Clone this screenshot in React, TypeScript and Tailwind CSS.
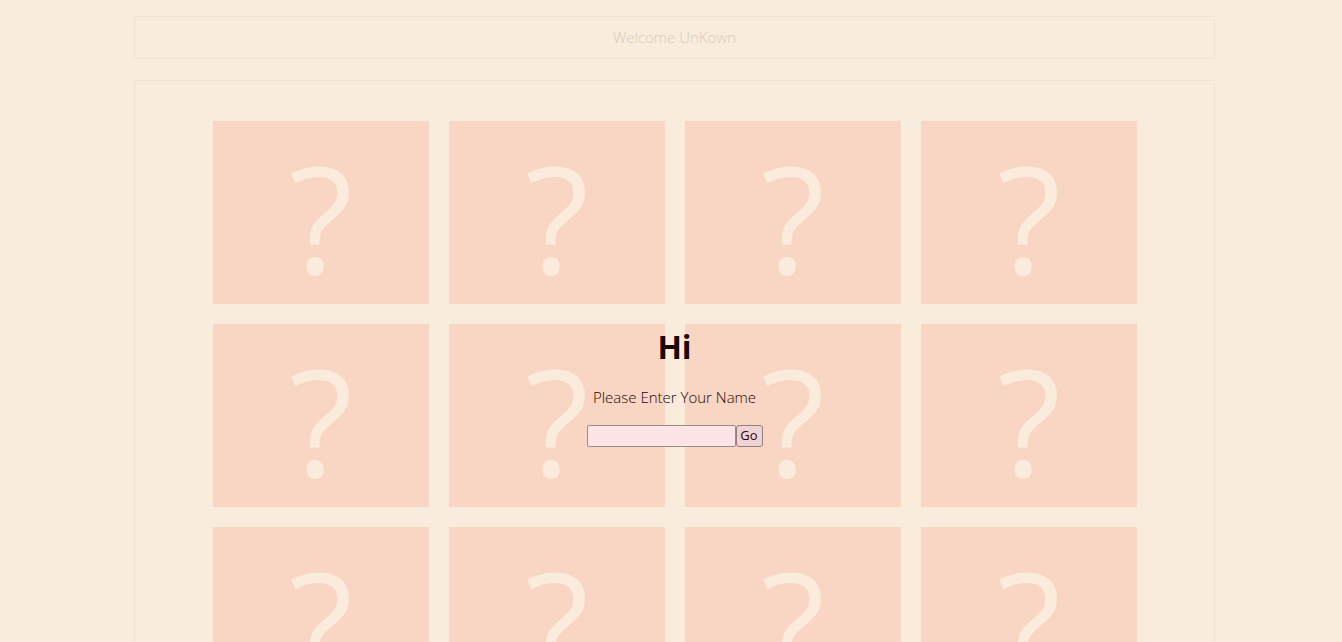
import React, { useState } from 'react';

const cards = Array.from({ length: 16 }, (_, i) => i);

function App() {
  const [name, setName] = useState('');

  return (
    <div className="min-h-screen bg-[#faecdc] pt-4 font-['Open_Sans',sans-serif]">
      <div className="ml-[134px] mr-[127px] flex h-[43px] items-center justify-center border border-[#f3e2d2] text-[15px] font-light text-[#d6cbc0]">
        Welcome UnKown
      </div>
      <div className="relative ml-[134px] mr-[127px] mt-[21px] border border-[#f3e2d2] pt-10 pb-10">
        <div className="grid grid-cols-[repeat(4,216px)] justify-center gap-5 pl-px">
          {cards.map((c) => (
            <div
              key={c}
              className="flex h-[183px] items-center justify-center overflow-hidden bg-[#f9d5c3] text-[148px] font-medium leading-none text-[#faebdc]"
            >
              <span className="mt-[8px]">?</span>
            </div>
          ))}
        </div>
        <div className="absolute left-0 right-0 top-[246px] flex flex-col items-center">
          <h1 className="text-[32px] font-bold leading-10 text-[#1c0606]">Hi</h1>
          <p className="mt-[19px] text-[15px] font-light text-[#1f0606]">Please Enter Your Name</p>
          <div className="mt-[16px] flex items-center">
            <input
              value={name}
              onChange={(e) => setName(e.target.value)}
              className="h-[22px] w-[149px] rounded-[2px] border border-[#9b8a8c] bg-[#fde4e6] px-1 text-[13px] outline-none"
            />
            <button
              type="button"
              className="h-[22px] w-[27px] rounded-[3px] border border-[#8f8082] bg-[#f2d2d4] text-[13px] text-[#1c0a0a]"
            >
              Go
            </button>
          </div>
        </div>
      </div>
    </div>
  );
}

export default App;
